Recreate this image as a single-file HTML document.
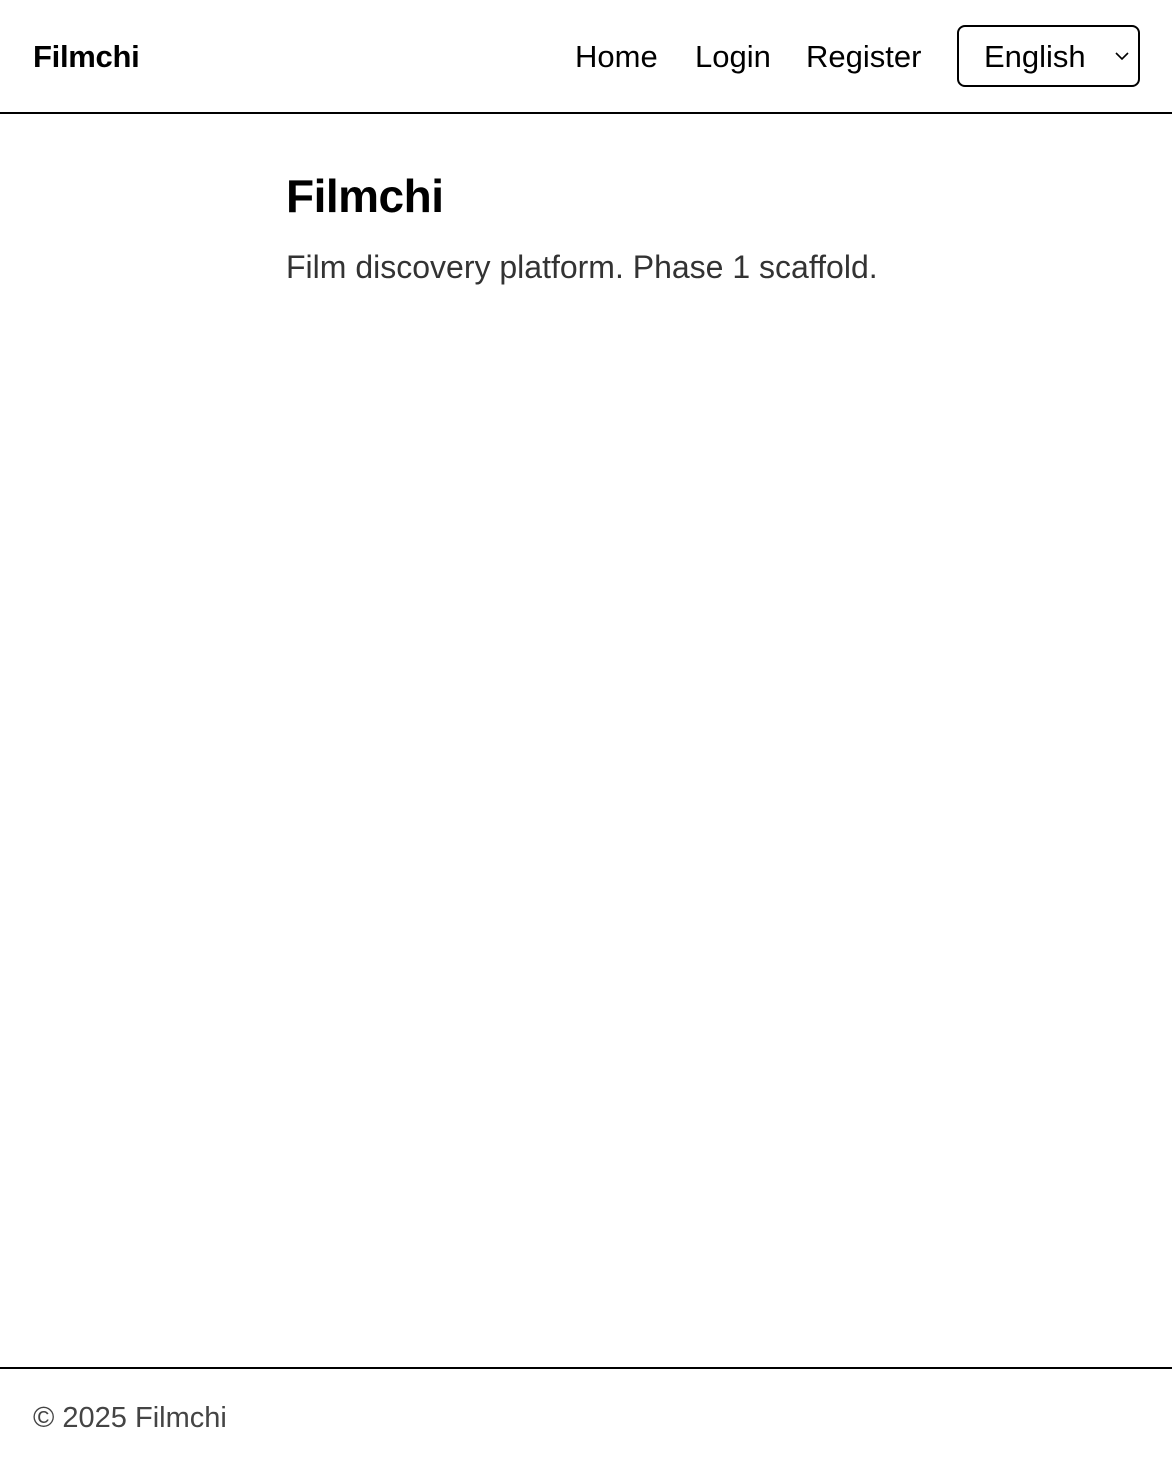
<!DOCTYPE html>
<html><head><meta charset="utf-8">
<style>
html,body{margin:0;padding:0;width:1172px;height:1466px;background:#fff;font-family:"Liberation Sans",sans-serif;overflow:hidden;position:relative}
.hdr{position:absolute;left:0;top:0;width:1172px;height:112px;border-bottom:2px solid #000;box-sizing:content-box}
.brand{position:absolute;left:33px;top:37px;font-size:31px;font-weight:bold;color:#000;line-height:40px;letter-spacing:-0.3px}
.nav{position:absolute;top:37px;font-size:31px;line-height:40px;color:#000}
.sel{position:absolute;left:957px;top:25px;width:179px;height:58px;border:2px solid #000;border-radius:8px}
.sel span{position:absolute;left:25px;top:10px;font-size:31px;line-height:40px}
.sel svg{position:absolute;right:8px;top:24px}
h1{position:absolute;left:286px;top:168px;margin:0;font-size:46px;font-weight:bold;line-height:56px;letter-spacing:-0.5px}
p{position:absolute;left:286px;top:247px;margin:0;font-size:32px;line-height:40px;color:#333}
.ftr{position:absolute;left:0;top:1367px;width:1172px;border-top:2px solid #000;height:99px}
.ftr div{position:absolute;left:33px;top:31px;font-size:29px;line-height:36px;color:#444}
</style></head><body>
<div class="hdr">
<div class="brand">Filmchi</div>
<div class="nav" style="left:575px;font-weight:500">Home</div>
<div class="nav" style="left:695px">Login</div>
<div class="nav" style="left:806px">Register</div>
<div class="sel"><span>English</span>
<svg width="16" height="10" viewBox="0 0 16 10"><path d="M2 2 L8 8 L14 2" fill="none" stroke="#000" stroke-width="1.6"/></svg></div>
</div>
<h1>Filmchi</h1>
<p>Film discovery platform. Phase 1 scaffold.</p>
<div class="ftr"><div>© 2025 Filmchi</div></div>
</body></html>
